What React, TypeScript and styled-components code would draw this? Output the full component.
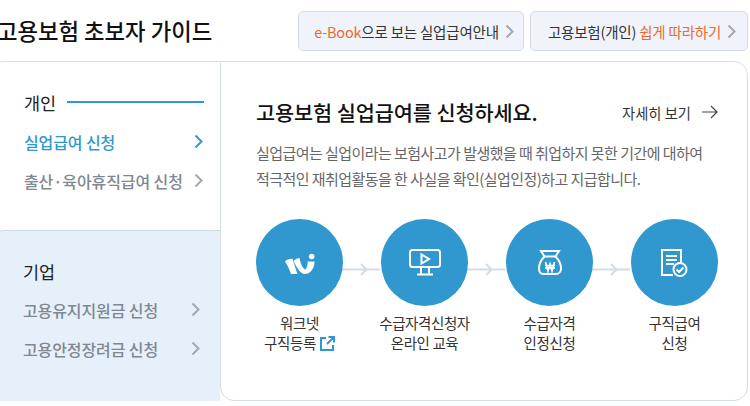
import React from 'react';
import styled, { createGlobalStyle } from 'styled-components';

const GlobalStyle = createGlobalStyle`
  html, body {
    margin: 0;
    padding: 0;
    background: #fff;
    overflow: hidden;
  }
  body {
    font-family: "Noto Sans CJK KR", "Noto Sans", sans-serif;
    color: #222;
  }
`;

const Page = styled.div`
  width: 750px;
  height: 406px;
  overflow: hidden;
`;
const Header = styled.header`
  height: 61px;
  display: flex;
  align-items: flex-start;
  justify-content: space-between;
  padding: 11px 2px 0 0;
  box-sizing: border-box;
`;
const PageTitle = styled.h1`
  margin: 0 0 0 -3px;
  font-size: 22.3px;
  line-height: 38px;
  font-weight: 500;
  color: #111;
  white-space: nowrap;
`;
const HeaderLinks = styled.div`
  display: flex;
  gap: 6px;
`;
const HeaderLink = styled.a<{ $width: number }>`
  width: ${(p) => p.$width}px;
  height: 40px;
  box-sizing: border-box;
  display: flex;
  align-items: center;
  justify-content: center;
  gap: 6px;
  padding-left: 6px;
  background: #f0f3f9;
  border: 1px solid #d3dbe4;
  border-radius: 5px;
  font-size: 14.5px;
  letter-spacing: -0.2px;
  color: #333;
  white-space: nowrap;
`;
const Accent = styled.span`
  color: #ee6a2c;
`;
const Card = styled.div`
  display: flex;
  margin-left: -10px;
  width: 758px;
  height: 340px;
`;
const Side = styled.aside`
  flex: none;
  width: 230px;
  display: flex;
  flex-direction: column;
`;
const SideGroup = styled.div<{ $tinted?: boolean }>`
  box-sizing: border-box;
  height: ${(p) => (p.$tinted ? 171 : 169)}px;
  padding: ${(p) => (p.$tinted ? '25px 20px 0 33px' : '25px 17px 0 34px')};
  background: ${(p) => (p.$tinted ? '#e6f0fa' : '#fff')};
  border-top: 1px solid ${(p) => (p.$tinted ? '#cddbe3' : '#d3dfe5')};
  border-top-left-radius: 14px;
`;
const GroupHead = styled.div<{ $tight?: boolean }>`
  display: flex;
  align-items: center;
  gap: 11px;
  height: 30px;
  margin-bottom: ${(p) => (p.$tight ? 4 : 5)}px;
  font-size: 17.5px;
  color: #222;
`;
const HeadRule = styled.span`
  flex: 1;
  height: 2px;
  margin-right: -1px;
  background: #3098ce;
`;
const SideItem = styled.a<{ $active?: boolean }>`
  display: flex;
  align-items: center;
  justify-content: space-between;
  height: 39px;
  font-size: 16px;
  letter-spacing: -0.1px;
  color: ${(p) => (p.$active ? '#3098ce' : '#7f8791')};
  font-weight: 500;
  white-space: nowrap;
`;
const Main = styled.main`
  flex: 1;
  min-width: 0;
  box-sizing: border-box;
  padding: 30px 36px 0 35px;
  background: #fff;
  border: 1px solid #d3dfe5;
  border-radius: 0 14px 14px 14px;
`;
const MainHead = styled.div`
  display: flex;
  align-items: center;
  justify-content: space-between;
  height: 40px;
`;
const MainTitle = styled.h2`
  margin: 0;
  font-size: 20.8px;
  font-weight: 500;
  color: #111;
  letter-spacing: -0.1px;
  white-space: nowrap;
`;
const MoreLink = styled.a`
  display: flex;
  align-items: center;
  gap: 11px;
  font-size: 14.3px;
  color: #333;
  margin-right: -7px;
  white-space: nowrap;
`;
const Summary = styled.p`
  margin: 8px 0 0;
  font-size: 15px;
  line-height: 26px;
  letter-spacing: -0.55px;
  color: #666;
  white-space: nowrap;
`;
const Steps = styled.ol`
  list-style: none;
  display: flex;
  margin: 27px 0 0 -19px;
  padding: 0;
`;
const Step = styled.li`
  position: relative;
  flex: none;
  width: 125px;
  display: flex;
  flex-direction: column;
  align-items: center;
`;
const Circle = styled.div`
  width: 87px;
  height: 87px;
  border-radius: 50%;
  background: #3098ce;
  display: flex;
  align-items: center;
  justify-content: center;
  position: relative;
  z-index: 1;
`;
const Connector = styled.svg`
  position: absolute;
  left: 105px;
  top: 44px;
  width: 40px;
  height: 13px;
`;
const StepLabel = styled.div`
  margin-top: 7px;
  font-size: 14.5px;
  line-height: 20px;
  letter-spacing: -0.4px;
  color: #333;
  text-align: center;
  white-space: nowrap;
`;
const ExternalIcon = styled.svg`
  vertical-align: -2px;
  margin-left: 4px;
`;

const Chevron = ({ color = '#a3a8b0', size = 15 }: { color?: string; size?: number }) => (
  <svg width={size * 0.6} height={size} viewBox="0 0 9 15" fill="none" style={{ flex: 'none' }}>
    <path d="M1.5 1.5 7.5 7.5l-6 6" stroke={color} strokeWidth="2" />
  </svg>
);

const Link = () => (
  <Connector viewBox="0 0 40 13" fill="none" stroke="#d3dce6" strokeWidth="2">
    <path d="M0 6.5h38" />
    <path d="M19 1 24.5 6.5 19 12" />
  </Connector>
);

const WorknetIcon = () => (
  <svg width="30" height="24" viewBox="0 -3 30 24" fill="#fff">
    <path d="M0 7.500C2 5.500 5 4.500 7.500 4.800 9 9 10.500 15 12.500 20H6C4.500 15.500 2.500 11 0 7.500Z" />
    <path d="M8.500 7C10.500 5 12.500 4 14.500 4 15.500 9 17 13.500 20 15.500 22 14.500 22.700 11 22.700 7.500H29.500C29.700 14 25.500 20 20 20 15 20 11.500 13 8.500 7Z" />
    <circle cx="26.700" cy="2.500" r="2.800" />
  </svg>
);

const ScreenIcon = () => (
  <svg width="32" height="27" viewBox="0 0 32 27" fill="none" stroke="#fff" strokeWidth="2">
    <rect x="1" y="1" width="30" height="17" rx="2.5" />
    <path d="M12.5 5.500v9l7.500-4.500z" />
    <path d="M12 18v7M20 18v7M8 25.500h16" />
  </svg>
);

const BagIcon = () => (
  <svg width="24" height="25" viewBox="0 0 24 25" fill="none" stroke="#fff" strokeWidth="2">
    <path d="M3 1h18l-3.500 5.500c3 3 5.500 8 5.500 12 0 3-2 5.500-5 5.500H5.500C2.500 24 1 21.500 1 18.500c0-4 2.500-9 5.500-12L3 1Z" />
    <path d="M6.500 6.500h11" />
    <path d="M7.500 12l2.500 9 2-7 2 7 2.500-9M7 15.500h10M7 17.800h10" strokeWidth="1.700" />
  </svg>
);

const DocCheckIcon = () => (
  <svg width="27" height="28" viewBox="0 0 27 28" fill="none">
    <path d="M20 15V1H1v25h11" stroke="#fff" strokeWidth="2" />
    <path d="M5 7h11M5 11h11M5 15h8" stroke="#fff" strokeWidth="2" />
    <circle cx="19" cy="20.500" r="6.500" fill="#3098ce" stroke="#fff" strokeWidth="2" />
    <path d="M15.500 20.500l2.500 2.500 4.500-4.500" stroke="#fff" strokeWidth="2" />
  </svg>
);

const App = () => {
  return (
    <Page>
      <GlobalStyle />
      <Header>
        <PageTitle>고용보험 초보자 가이드</PageTitle>
        <HeaderLinks>
          <HeaderLink $width={226}>
            <span>
              <Accent>e-Book</Accent>으로 보는 실업급여안내
            </span>
            <Chevron />
          </HeaderLink>
          <HeaderLink $width={218}>
            <span>
              고용보험(개인) <Accent>쉽게 따라하기</Accent>
            </span>
            <Chevron />
          </HeaderLink>
        </HeaderLinks>
      </Header>
      <Card>
        <Side>
          <SideGroup>
            <GroupHead>
              개인
              <HeadRule />
            </GroupHead>
            <SideItem $active>
              실업급여 신청
              <Chevron color="#3098ce" />
            </SideItem>
            <SideItem>
              출산·육아휴직급여 신청
              <Chevron />
            </SideItem>
          </SideGroup>
          <SideGroup $tinted>
            <GroupHead $tight>기업</GroupHead>
            <SideItem>
              고용유지지원금 신청
              <Chevron />
            </SideItem>
            <SideItem>
              고용안정장려금 신청
              <Chevron />
            </SideItem>
          </SideGroup>
        </Side>
        <Main>
          <MainHead>
            <MainTitle>고용보험 실업급여를 신청하세요.</MainTitle>
            <MoreLink>
              자세히 보기
              <svg width="16" height="14" viewBox="0 0 16 14" fill="none" stroke="#444" strokeWidth="1.200">
                <path d="M0 7h15M9 1l6 6-6 6" />
              </svg>
            </MoreLink>
          </MainHead>
          <Summary>
            실업급여는 실업이라는 보험사고가 발생했을 때 취업하지 못한 기간에 대하여
            <br />
            적극적인 재취업활동을 한 사실을 확인(실업인정)하고 지급합니다.
          </Summary>
          <Steps>
            <Step>
              <Circle>
                <WorknetIcon />
              </Circle>
              <Link />
              <StepLabel>
                워크넷
                <br />
                구직등록
                <ExternalIcon width="15" height="15" viewBox="0 0 15 15" fill="none" stroke="#3098ce" strokeWidth="2">
                  <path d="M6 2H1v12h12V9M8.5 1H14v5.500M14 1 7 8" />
                </ExternalIcon>
              </StepLabel>
            </Step>
            <Step>
              <Circle>
                <ScreenIcon />
              </Circle>
              <Link />
              <StepLabel>
                수급자격신청자
                <br />
                온라인 교육
              </StepLabel>
            </Step>
            <Step>
              <Circle>
                <BagIcon />
              </Circle>
              <Link />
              <StepLabel>
                수급자격
                <br />
                인정신청
              </StepLabel>
            </Step>
            <Step>
              <Circle>
                <DocCheckIcon />
              </Circle>
              <StepLabel>
                구직급여
                <br />
                신청
              </StepLabel>
            </Step>
          </Steps>
        </Main>
      </Card>
    </Page>
  );
};

export default App;
